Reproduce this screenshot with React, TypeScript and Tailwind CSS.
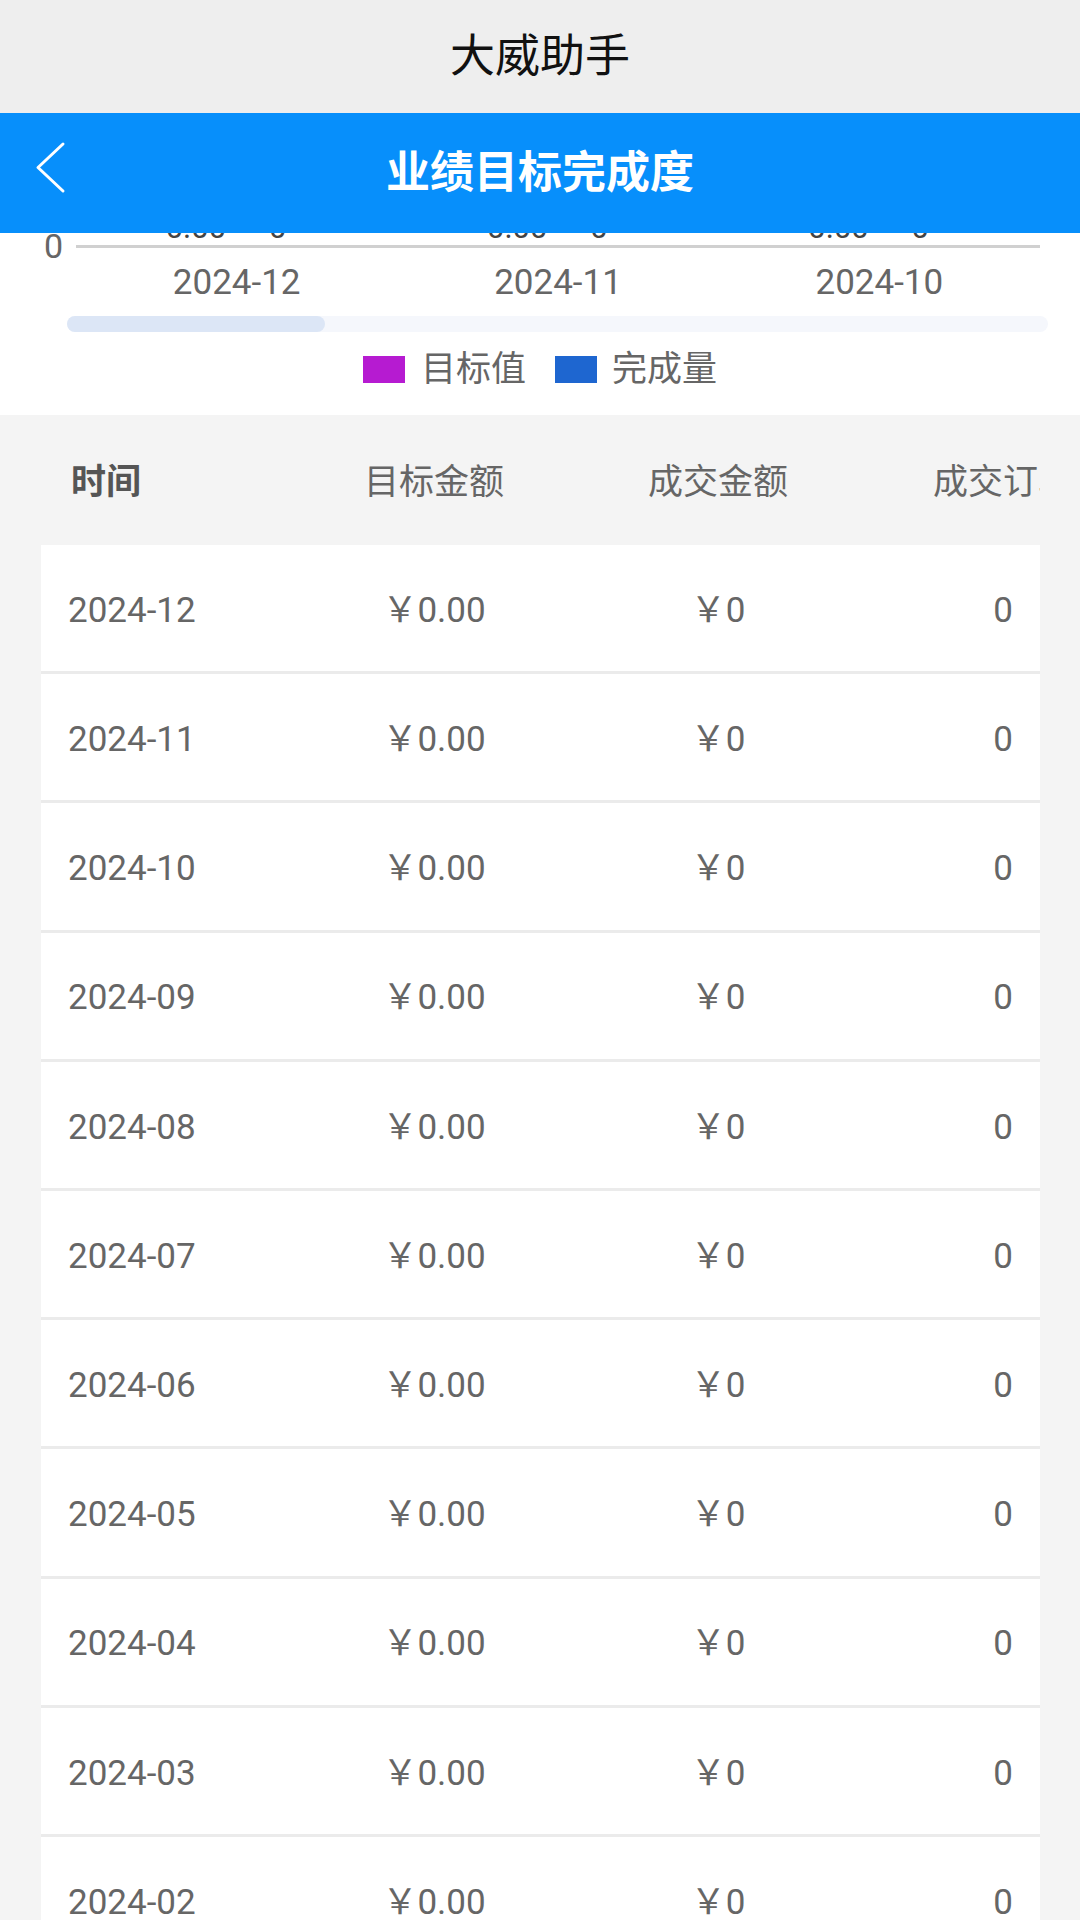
import React from 'react';

const months = [
  '2024-12', '2024-11', '2024-10', '2024-09', '2024-08', '2024-07',
  '2024-06', '2024-05', '2024-04', '2024-03', '2024-02', '2024-01',
];

const chartMonths = ['2024-12', '2024-11', '2024-10'];

export default function App() {
  return (
    <div className="min-h-[1920px] bg-[#f4f4f4] font-[Roboto,'Noto_Sans_CJK_SC',sans-serif]">
      <div className="flex h-[113px] items-center justify-center bg-[#eeeeee] text-[45px] text-[#111]">
        大威助手
      </div>
      <div className="relative flex h-[120px] items-center justify-center bg-[#078ffb]">
        <svg className="absolute left-0 top-0" width="80" height="120" viewBox="0 0 80 120">
          <polyline points="63,31 38,54.5 63,78" fill="none" stroke="white" strokeWidth="3" strokeLinecap="round" strokeLinejoin="round" />
        </svg>
        <span className="text-[44px] font-bold text-white">业绩目标完成度</span>
      </div>

      <div className="h-[182px] overflow-hidden bg-white">
        <div className="relative h-[83px]">
          <span className="absolute left-[44px] top-[-4px] text-[34px] leading-none text-[#666]">0</span>
          <div className="absolute left-[76px] top-[-21px] grid w-[964px] grid-cols-3 text-[31px] leading-none text-[#444]">
            {chartMonths.map((m) => (
              <div key={m} className="flex justify-center gap-[22px]">
                <span className="w-[60px] text-center">0.00</span>
                <span className="w-[60px] text-center">0</span>
              </div>
            ))}
          </div>
          <div className="absolute left-[76px] top-[12px] h-[3px] w-[964px] bg-[#d0d0d0]" />
          <div className="absolute left-[76px] top-[32px] grid w-[964px] grid-cols-3 text-center text-[35px] leading-none text-[#666]">
            {chartMonths.map((m) => (
              <span key={m}>{m}</span>
            ))}
          </div>
        </div>
        <div className="ml-[67px] h-[16px] w-[981px] rounded-full bg-[#f5f7fc]">
          <div className="h-full w-[258px] rounded-full bg-[#dce6f6]" />
        </div>
        <div className="mt-[24px] flex h-[27px] items-center justify-center text-[35px] text-[#666]">
          <span className="h-[27px] w-[42px] bg-[#b61bd1]" />
          <span className="ml-[16px] leading-none">目标值</span>
          <span className="ml-[29px] h-[27px] w-[42px] bg-[#1e66d0]" />
          <span className="ml-[15px] leading-none">完成量</span>
        </div>
      </div>

      <div className="ml-[41px] w-[999px] overflow-hidden">
        <div className="w-[1105px]">
          <div className="flex h-[130px] items-center bg-[#f4f4f4] pt-[6px] text-[35px] text-[#666]">
            <div className="w-[251px] pl-[30px] font-bold text-[#555]">时间</div>
            <div className="w-[284px] text-center">目标金额</div>
            <div className="w-[284px] text-center">成交金额</div>
            <div className="w-[286px] text-center">成交订单</div>
          </div>
          {months.map((m) => (
            <div
              key={m}
              className="flex h-[129.2px] items-center border-b-[3px] border-[#ebebeb] bg-white pt-[6px] text-[35px] text-[#666]"
            >
              <div className="w-[251px] pl-[27px]">{m}</div>
              <div className="w-[284px] text-center">￥0.00</div>
              <div className="w-[284px] text-center">￥0</div>
              <div className="w-[286px] text-center">0</div>
            </div>
          ))}
        </div>
      </div>
    </div>
  );
}
